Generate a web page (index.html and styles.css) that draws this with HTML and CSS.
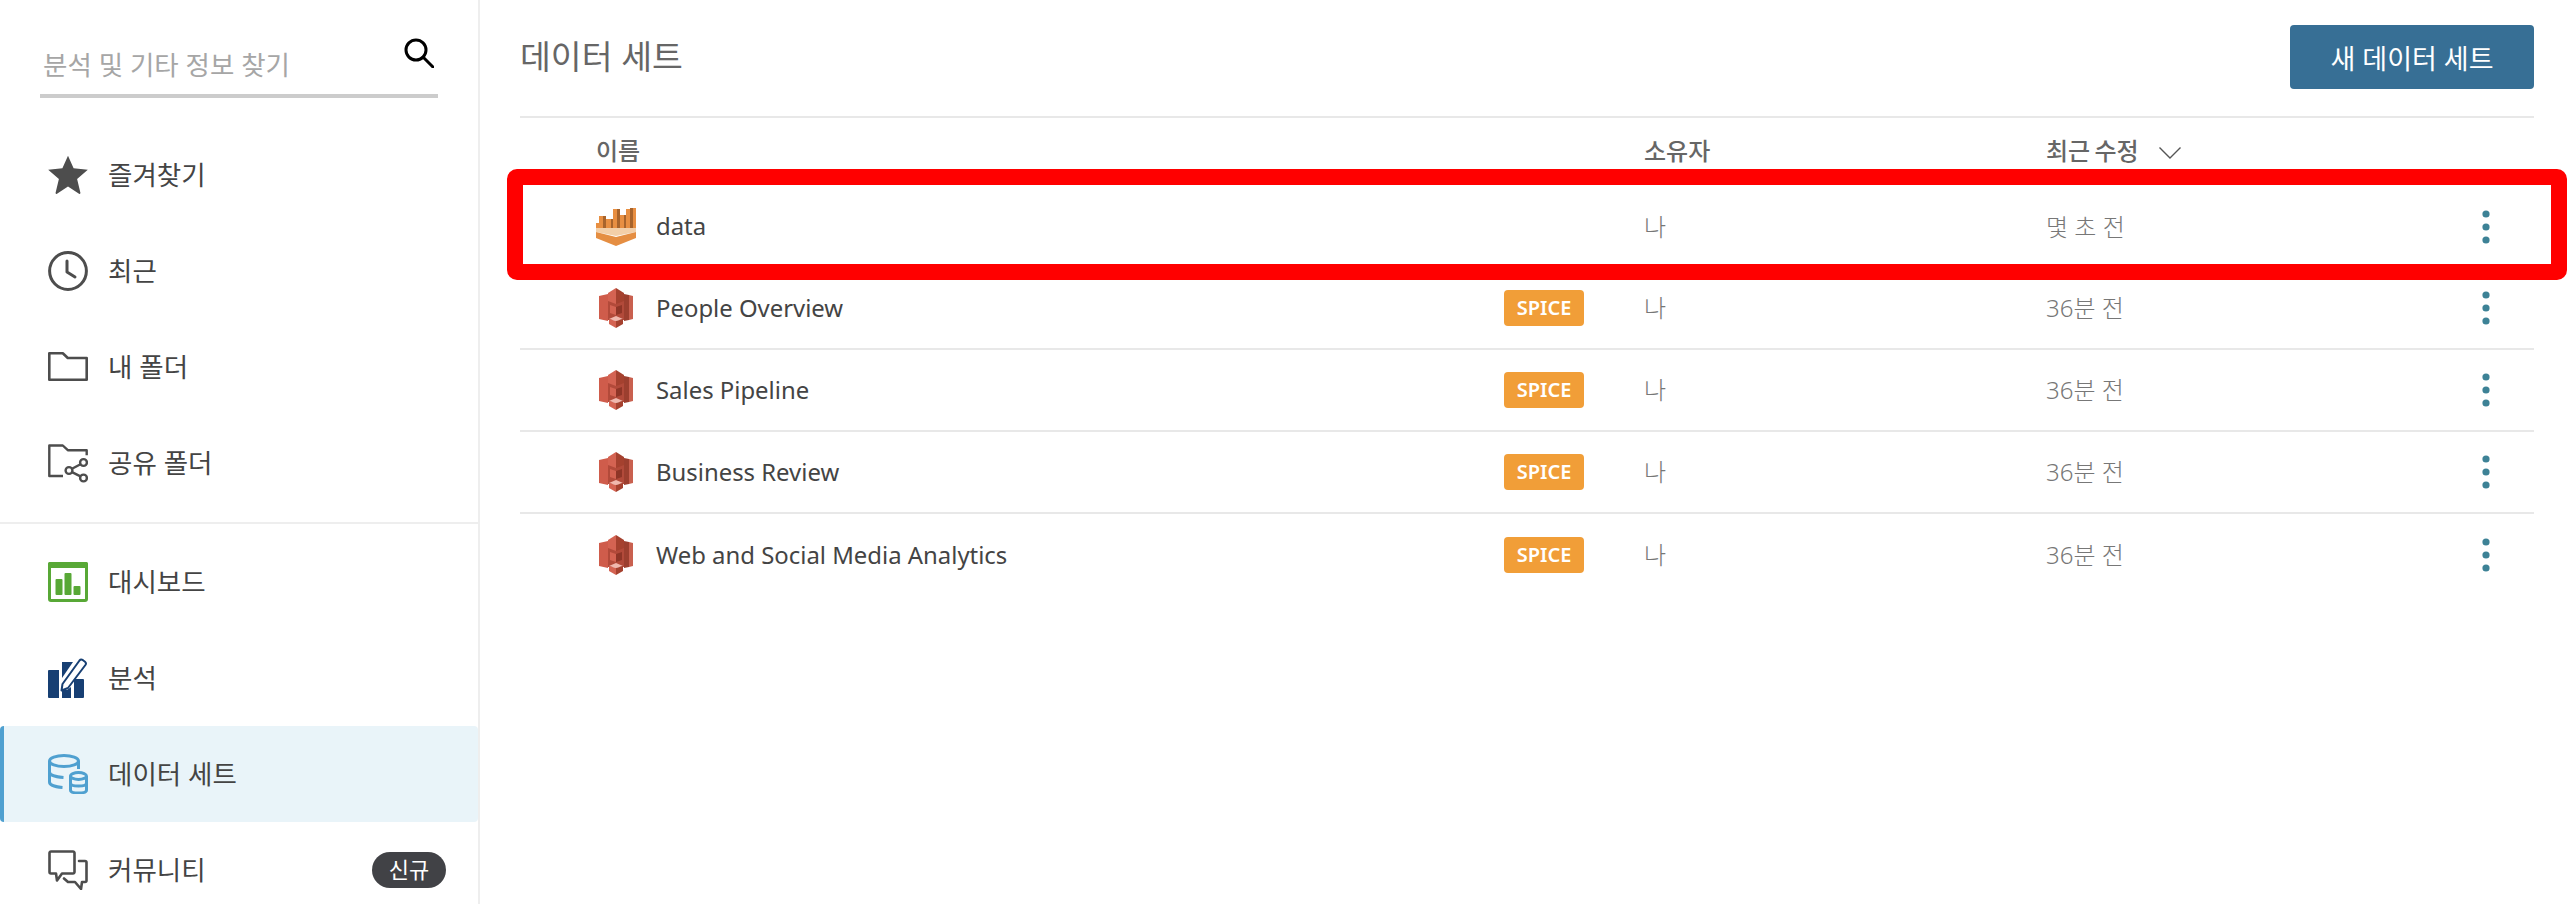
FILE: index.html
```html
<!DOCTYPE html>
<html lang="ko">
  <head>
    <meta charset="UTF-8" />
    <title>데이터 세트</title>
    <link rel="stylesheet" href="styles.css">
  </head>

  <body>
    <svg class="defs" width="0" height="0">
      <symbol id="s3" viewBox="0 0 34 40">
        <polygon points="9,10 25,10 25,32 9,32" fill="#b24a3a" />
        <polygon points="0,8 9,6 9,33 0,31" fill="#cf5c4b" />
        <polygon points="25,6 30,7 30,32 25,33" fill="#9c3f2f" />
        <polygon points="30,7 34,8 34,31 30,32" fill="#c9604f" />
        <polygon points="9,5 17,0 17,16 9,13" fill="#d46352" />
        <polygon points="25,5 17,0 17,16 25,13" fill="#a5412f" />
        <polygon points="11,17 17,19 17,27 11,25" fill="#d46352" />
        <polygon points="23,17 17,19 17,27 23,25" fill="#8e3527" />
        <polygon points="10,31 17,28 24,31 17,33" fill="#f0b8ae" />
        <polygon points="10,31 17,33 17,40 10,36" fill="#d46352" />
        <polygon points="24,31 17,33 17,40 24,36" fill="#a5412f" />
      </symbol>
      <symbol id="quicksight" viewBox="0 0 40 38">
        <rect x="0" y="15" width="3" height="6" fill="#e88f42" />
        <rect x="3" y="8" width="4" height="13" fill="#e88f42" />
        <rect x="7" y="8" width="3" height="14" fill="#a8642c" />
        <rect x="10" y="11" width="5" height="13" fill="#e88f42" />
        <rect x="15" y="11" width="2" height="13" fill="#a8642c" />
        <rect x="17" y="1" width="4" height="23" fill="#e88f42" />
        <rect x="21" y="1" width="3" height="23" fill="#a8642c" />
        <rect x="24" y="7" width="4" height="17" fill="#e88f42" />
        <rect x="28" y="7" width="2" height="17" fill="#a8642c" />
        <rect x="30" y="1" width="4" height="20" fill="#e88f42" />
        <rect x="34" y="0" width="3" height="20" fill="#a8642c" />
        <rect x="37" y="0" width="3" height="20" fill="#e88f42" />
        <polygon points="0,20 40,20 40,24 20,28 0,24" fill="#f3cfa8" />
        <polygon points="0,24 20,29 40,24 40,30 20,38 0,30" fill="#e58e42" />
      </symbol>
      <symbol id="dots" viewBox="0 0 8 34">
        <circle cx="4" cy="4" r="3.6" fill="#3d8296" />
        <circle cx="4" cy="17" r="3.6" fill="#3d8296" />
        <circle cx="4" cy="30" r="3.6" fill="#3d8296" />
      </symbol>
    </svg>

    <div class="page">
      <aside class="sidebar">
        <div class="search">
          <span class="search__text">분석 및 기타 정보 찾기</span>
          <svg class="search__icon" viewBox="0 0 30 30" fill="none" stroke="#000" stroke-width="3">
            <circle cx="12" cy="12" r="10" />
            <path d="M19 19l10 10" stroke-linecap="round" />
          </svg>
        </div>

        <nav class="nav nav--top">
          <a class="nav__item">
            <svg class="nav__icon" viewBox="0 0 40 40">
              <path fill="#4d4d4d" d="M20 .8l5.6 12.5 14.2 1.4-10.7 9.4 3.3 13.6c.2 1-.6 1.5-1.4 1L20 31.6 9 38.7c-.8.5-1.6 0-1.4-1l3.3-13.6L.2 14.7l14.2-1.4z" />
            </svg>
            <span class="nav__label">즐겨찾기</span>
          </a>
          <a class="nav__item">
            <svg class="nav__icon" viewBox="0 0 40 40" fill="none" stroke="#4d4d4d" stroke-width="3">
              <circle cx="20" cy="20" r="18.4" />
              <path d="M19 10v11l8 5" stroke-linecap="round" stroke-linejoin="round" />
            </svg>
            <span class="nav__label">최근</span>
          </a>
          <a class="nav__item">
            <svg class="nav__icon" viewBox="0 0 40 40" fill="none" stroke="#4d4d4d" stroke-width="2.6">
              <path d="M1.3 6.3h13.5l5 4.7h18.9v21.7H1.3z" stroke-linejoin="round" />
            </svg>
            <span class="nav__label">내 폴더</span>
          </a>
          <a class="nav__item">
            <svg class="nav__icon" viewBox="0 0 40 40" fill="none" stroke="#4d4d4d" stroke-width="2.4">
              <path d="M15 33H1.3V2.5h13.5l5 4.7h18.9v5" stroke-linejoin="round" />
              <circle cx="21" cy="27.5" r="3.4" />
              <circle cx="35.5" cy="19.5" r="3.4" />
              <circle cx="35.5" cy="35" r="3.4" />
              <path d="M24 25.8l8.5-4.6M24 29.2l8.5 4.2" />
            </svg>
            <span class="nav__label">공유 폴더</span>
          </a>
        </nav>

        <nav class="nav">
          <a class="nav__item">
            <svg class="nav__icon" viewBox="0 0 40 40">
              <rect x="1.5" y="1.5" width="37" height="37" rx="1.5" fill="none" stroke="#58a836" stroke-width="3" />
              <rect x="0" y="0" width="40" height="6" rx="1.5" fill="#58a836" />
              <rect x="7.5" y="17" width="7" height="16" rx="1" fill="#58a836" />
              <rect x="16.5" y="11" width="7" height="22" rx="1" fill="#58a836" />
              <rect x="25.5" y="24" width="7" height="9" rx="1" fill="#58a836" />
            </svg>
            <span class="nav__label">대시보드</span>
          </a>
          <a class="nav__item">
            <svg class="nav__icon" viewBox="0 0 40 40">
              <path fill="#173f73" d="M1 12h10v28H1a1 1 0 0 1-1-1V13a1 1 0 0 1 1-1zM14 4h11l-11 16zM14 31l5 1 4-3v11h-9zM26 21h9a1 1 0 0 1 1 1v17a1 1 0 0 1-1 1h-9z" />
              <path fill="none" stroke="#173f73" stroke-width="2" stroke-linejoin="round" d="M14.500 26l17-23.500c1-1.200 2-1.300 3.500-.3l2 1.500c1.200 1 1.300 2 .4 3.300L20 30l-6.500 2.500z" />
            </svg>
            <span class="nav__label">분석</span>
          </a>
          <a class="nav__item nav__item--active">
            <svg class="nav__icon" viewBox="0 0 40 40" fill="none" stroke="#4fa0d0" stroke-width="3">
              <ellipse cx="16" cy="7" rx="14.500" ry="5.500" />
              <path d="M1.500 7v21c0 3 6 5 13 5.500M1.500 18c0 3 6 5 14 5.500M30.500 7v8" />
              <ellipse cx="30.500" cy="22" rx="8" ry="3.500" />
              <path d="M22.500 22v14c0 2 3.500 3 8 3s8-1 8-3V22M22.500 29c0 2 3.500 3 8 3s8-1 8-3" />
            </svg>
            <span class="nav__label">데이터 세트</span>
          </a>
          <a class="nav__item">
            <svg class="nav__icon" viewBox="0 0 40 40" fill="none" stroke="#4d4d4d" stroke-width="2.6" stroke-linejoin="round" stroke-linecap="round">
              <path d="M3 1.500h22a1.500 1.500 0 0 1 1.500 1.500v19a1.500 1.500 0 0 1-1.500 1.500H14l-5 7-1-7H3A1.500 1.500 0 0 1 1.500 22V3A1.500 1.500 0 0 1 3 1.500z" />
              <path d="M31 11h6a1.500 1.500 0 0 1 1.500 1.500v18a1.500 1.500 0 0 1-1.500 1.500h-3l-1 7-6-7h-7l-4-3.500" />
            </svg>
            <span class="nav__label">커뮤니티</span>
            <span class="badge-new">신규</span>
          </a>
        </nav>
      </aside>

      <main class="main">
        <header class="main__head">
          <h1 class="main__title">데이터 세트</h1>
          <button class="btn">새 데이터 세트</button>
        </header>

        <div class="table">
          <div class="row row--head">
            <div class="cell cell--name">이름</div>
            <div class="cell">소유자</div>
            <div class="cell cell--sort">
              <span class="sort-label">최근 수정</span>
              <svg class="chevron" viewBox="0 0 22 12" fill="none" stroke="#555" stroke-width="1.400">
                <path d="M.5.5L11 11 21.500.5" />
              </svg>
            </div>
          </div>

          <div class="row row--first">
            <div class="cell cell--name">
              <svg class="ds-icon ds-icon--qs"><use href="#quicksight" /></svg>
              <span class="ds-name">data</span>
            </div>
            <div class="cell cell--muted">나</div>
            <div class="cell cell--muted">몇 초 전</div>
            <svg class="dots"><use href="#dots" /></svg>
          </div>

          <div class="row">
            <div class="cell cell--name">
              <svg class="ds-icon"><use href="#s3" /></svg>
              <span class="ds-name">People Overview</span>
              <span class="spice">SPICE</span>
            </div>
            <div class="cell cell--muted">나</div>
            <div class="cell cell--muted">36분 전</div>
            <svg class="dots"><use href="#dots" /></svg>
          </div>

          <div class="row">
            <div class="cell cell--name">
              <svg class="ds-icon"><use href="#s3" /></svg>
              <span class="ds-name">Sales Pipeline</span>
              <span class="spice">SPICE</span>
            </div>
            <div class="cell cell--muted">나</div>
            <div class="cell cell--muted">36분 전</div>
            <svg class="dots"><use href="#dots" /></svg>
          </div>

          <div class="row">
            <div class="cell cell--name">
              <svg class="ds-icon"><use href="#s3" /></svg>
              <span class="ds-name">Business Review</span>
              <span class="spice">SPICE</span>
            </div>
            <div class="cell cell--muted">나</div>
            <div class="cell cell--muted">36분 전</div>
            <svg class="dots"><use href="#dots" /></svg>
          </div>

          <div class="row row--last">
            <div class="cell cell--name">
              <svg class="ds-icon"><use href="#s3" /></svg>
              <span class="ds-name">Web and Social Media Analytics</span>
              <span class="spice">SPICE</span>
            </div>
            <div class="cell cell--muted">나</div>
            <div class="cell cell--muted">36분 전</div>
            <svg class="dots"><use href="#dots" /></svg>
          </div>
        </div>

        <div class="highlight"></div>
      </main>
    </div>
  </body>
</html>
```

FILE: styles.css
```css
* {
  margin: 0;
  padding: 0;
  box-sizing: border-box;
}

html,
body {
  height: 100%;
  overflow: hidden;
}

body {
  font-family: "Noto Sans", "Noto Sans CJK KR", sans-serif;
  background: #ffffff;
  color: #444444;
}

.defs {
  position: absolute;
}

.page {
  display: flex;
  height: 904px;
  overflow: hidden;
}

/* sidebar */
.sidebar {
  width: 480px;
  flex-shrink: 0;
  border-right: 2px solid #eeeeee;
}

.search {
  display: flex;
  justify-content: space-between;
  height: 98px;
  width: 398px;
  margin: 0 0 29px 40px;
  padding: 38px 4px 0 3px;
  border-bottom: 4px solid #cccccc;
}

.search__text {
  font-size: 26.5px;
  line-height: 54px;
  color: #a6a6a6;
}

.search__icon {
  width: 30px;
  height: 30px;
}

.nav--top {
  padding-bottom: 11px;
  border-bottom: 2px solid #eeeeee;
  margin-bottom: 10px;
}

.nav__item {
  display: flex;
  align-items: center;
  height: 96px;
  padding: 0 32px 0 48px;
  font-size: 26.5px;
  color: #444444;
}

.nav__icon {
  width: 40px;
  height: 40px;
  margin-right: 20px;
  flex-shrink: 0;
}

.nav__label {
  padding-bottom: 3px;
}

.nav__item--active {
  background: #e9f4f9;
  border-left: 4px solid #4fa0d0;
  border-radius: 4px;
  padding-left: 44px;
}

.badge-new {
  margin-left: auto;
  width: 74px;
  height: 36px;
  line-height: 34px;
  text-align: center;
  border-radius: 18px;
  background: #414246;
  color: #ffffff;
  font-size: 22px;
}

/* main */
.main {
  flex: 1;
  position: relative;
  padding: 0 40px;
}

.main__head {
  display: flex;
  justify-content: space-between;
  align-items: flex-start;
  padding: 25px 0 27px;
  border-bottom: 2px solid #e8e8e8;
}

.main__title {
  font-size: 33.5px;
  font-weight: 400;
  line-height: 63px;
  color: #666666;
}

.btn {
  width: 244px;
  height: 64px;
  border: none;
  border-radius: 4px;
  background: #376f95;
  color: #ffffff;
  font-family: inherit;
  font-size: 27px;
}

.row {
  display: grid;
  grid-template-columns: 1124px 402px 1fr 8px;
  align-items: center;
  height: 82px;
  padding-right: 44px;
  border-bottom: 2px solid #e8e8e8;
}

.row--head {
  height: 67px;
  padding-bottom: 4px;
  border-bottom: none;
  font-size: 24px;
  font-weight: 500;
  color: #666666;
}

.row--first {
  height: 83px;
  border-bottom: none;
}

.row--last {
  border-bottom: none;
}

.cell--name {
  display: flex;
  align-items: center;
  padding-left: 76px;
}

.cell--sort {
  display: flex;
  align-items: center;
}

.sort-label {
  word-spacing: -2px;
}

.chevron {
  width: 22px;
  height: 12px;
  margin: 6px 0 0 20px;
}

.cell--muted {
  font-size: 24px;
  font-weight: 300;
  color: #777777;
  padding-bottom: 3px;
}

.ds-icon {
  width: 34px;
  height: 40px;
  margin: 0 23px 0 3px;
}

.ds-icon--qs {
  width: 40px;
  height: 38px;
  margin: 0 20px 0 0;
}

.ds-name {
  font-size: 23.9px;
  color: #444444;
  padding-bottom: 2px;
}

.spice {
  margin: 0 60px 0 auto;
  width: 80px;
  height: 36px;
  line-height: 36px;
  text-align: center;
  border-radius: 4px;
  background: #f19e38;
  color: #ffffff;
  font-size: 20px;
  font-weight: 600;
}

.dots {
  width: 8px;
  height: 34px;
}

.highlight {
  position: absolute;
  left: 27px;
  top: 169px;
  width: 2060px;
  height: 111px;
  border: 16px solid #ff0000;
  border-radius: 10px;
}
```
